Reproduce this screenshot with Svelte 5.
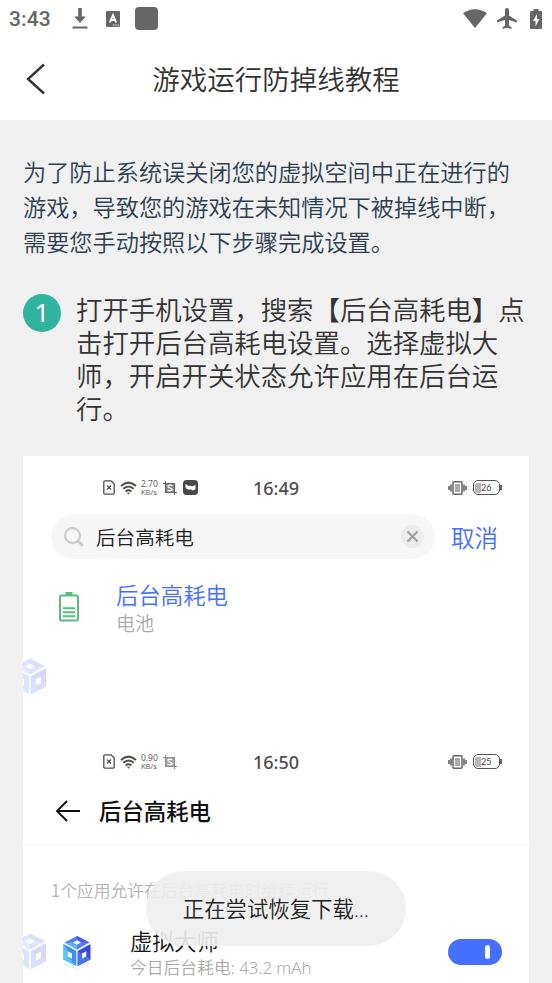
<script>
	const title = '游戏运行防掉线教程';
	const intro =
		'为了防止系统误关闭您的虚拟空间中正在进行的游戏，导致您的游戏在未知情况下被掉线中断，需要您手动按照以下步骤完成设置。';
	const step =
		'打开手机设置，搜索【后台高耗电】点击打开后台高耗电设置。选择虚拟大师，开启开关状态允许应用在后台运行。';
	const toast = '正在尝试恢复下载...';
</script>

{#snippet cube(faded)}
	<svg class="cube" class:faded viewBox="0 0 32 36">
		<path d="M16 2 28.500 8.500 16 15.500 3.500 8.500z" fill="#5080f6" />
		<path d="M16 2 28.500 8.500l-7.500 0-5-2.500z" fill="#4a5cf0" />
		<path d="M3.500 8.500l7.500 0 5 2.500v4.500z" fill="#5cb4ff" />
		<path d="M2.500 10 15.300 17v15L2.500 25.500z" fill="#3d8cfa" />
		<path d="M2.500 10 6.500 16v6l8.800 10L2.500 25.500z" fill="#4cc8ff" />
		<path d="M16.700 17l12.800-7v15.500L16.700 32z" fill="#3b45ee" />
		<path d="M16.700 32V17l4 2.500v5.500l5-2.500 3.800 3z" fill="#4674f7" />
		<path d="M16 6.300l4.200 2.200-4.200 2.300-4.200-2.300z" fill="#fff" />
		<path d="M6.700 17.200l4.300 2.300v5.300l-4.300-2.300z" fill="#fff" />
		<path d="M21 19.500l4.300-2.300v5.300L21 24.800z" fill="#fff" />
		<path d="M3 28l13 6.500L29 28v3l-13 5-13-5z" fill="#a9c4ff" opacity=".18" />
	</svg>
{/snippet}

{#snippet phoneBar(time, speed, level, messenger)}
	<div class="phone-bar">
		<div class="bar-left">
			<svg width="12" height="15" viewBox="0 0 12 15" fill="none" stroke="#4d4d4d">
				<path d="M2 .8h6l3.200 3.200v9q0 1.200-1.200 1.200H2Q.8 14.200.8 13V2Q.8.8 2 .8z" stroke-width="1.300" />
				<path d="M4 5.500l4 4m0-4l-4 4" stroke-width="1.300" />
			</svg>
			<svg class="wifi" width="17" height="14" viewBox="0 0 17 14" fill="none" stroke="#4d4d4d" stroke-width="2">
				<path d="M1 5Q8.500-1.800 16 5M3.300 7.800q5.200-4.600 10.400 0M5.700 10.400q2.800-2.400 5.600 0" />
				<path d="M6.900 11.800h3.200l-1.600 2z" fill="#4d4d4d" stroke="none" />
			</svg>
			<div class="speed"><span>{speed}</span><span>KB/s</span></div>
			<svg class:pale={!messenger} width="14" height="14" viewBox="0 0 14 14" fill="none" stroke="#666">
				<path d="M0 2.500h11.500V14M2.500 0v11.500H14" stroke-width="1.200" />
				<path d="M3 3h8v8H3z" fill="#888" stroke="none" />
				<path d="M9.300 4.700Q6.900 3.500 5.400 4.600T7 7t1.600 2.300-4.100 0" stroke="#fff" stroke-width="1.200" />
			</svg>
			{#if messenger}
				<svg class="messenger" width="15" height="15" viewBox="0 0 15 15">
					<rect width="15" height="15" rx="3.500" fill="#484848" />
					<path d="M2.500 4l3.200 2 1.500-.5 1.800 1 3.500-1.500v4q-1.500 1.800-3.300 1.200l-1.700-1-1.500.5q-3.300-.7-3.500-3z" fill="#fff" />
				</svg>
			{/if}
		</div>
		<time>{time}</time>
		<div class="bar-right">
			<svg width="19" height="14" viewBox="0 0 19 14" fill="none" stroke="#666">
				<rect x="5" y=".8" width="9" height="12.400" rx="1" fill="#fff" stroke-width="1.500" />
				<path d="M7 3h5v8H7z" fill="#aaa" stroke="none" />
				<path d="M3 3.500v7M16 3.500v7M1 5v4M18 5v4" stroke-width="1.600" />
			</svg>
			<div class="level"><i></i><span>{level}</span></div>
		</div>
	</div>
{/snippet}

<div class="page">
	<div class="system-bar">
		<span class="clock">3:43</span>
		<svg class="download" width="16" height="21" viewBox="0 0 16 21" fill="#666">
			<path d="M6.200 0h3.600v8.500h4L8 15 2.200 8.500h4zM.5 18.500h15v2H.5z" />
		</svg>
		<svg class="letter" width="14" height="16" viewBox="0 0 14 16">
			<rect width="14" height="16" rx="1" fill="#666" />
			<path d="M3.800 11.500L7 4l3.200 7.500M5 9h4" fill="none" stroke="#fff" stroke-width="1.800" />
			<path d="M7 13.500h1.300v1H7zM9.300 13.500h1.300v1H9.300zM11.600 13.500h1.300v1h-1.300z" fill="#fff" />
		</svg>
		<i class="square"></i>
		<div class="system-right">
			<svg width="24" height="19" viewBox="0 0 24 19" fill="#666"><path d="M0 4.200Q12-3.600 24 4.200L12 19z" /></svg>
			<svg class="plane" width="20" height="21" viewBox="0 0 20 21" fill="#666">
				<path d="M20 14.500v-2l-8-5V2q0-2-2-2T8 2v5.500l-8 5v2L8 12v5.500L5.500 19.500V21l4.500-1.300 4.500 1.300v-1.500L12 17.500V12z" />
			</svg>
			<svg class="charge" width="12" height="20" viewBox="0 0 12 20">
				<path d="M3.500 0h5v2H11q1 0 1 1v16q0 1-1 1H1q-1 0-1-1V3q0-1 1-1h2.500z" fill="#666" />
				<path d="M7 5L3 12h2.500v5.500L9.500 10H7z" fill="#fff" />
			</svg>
		</div>
	</div>

	<header>
		<svg class="back" width="20" height="32" viewBox="0 0 20 32">
			<path d="M18 1.500L2 16l16 14.500" fill="none" stroke="#333" stroke-width="2.400" />
		</svg>
		<h1>{title}</h1>
	</header>

	<main>
		<p class="intro">{intro}</p>

		<div class="step">
			<span class="num">1</span>
			<p>{step}</p>
		</div>

		<div class="shots">
			<section class="first">
				{@render phoneBar('16:49', '2.70', 26, true)}
				<div class="search-row">
					<div class="search">
						<svg width="22" height="22" viewBox="0 0 22 22" fill="none" stroke="#cdcdcd" stroke-width="2.300">
							<circle cx="9.500" cy="9.500" r="7.500" />
							<path d="M15 15l5 5" stroke-width="3" />
						</svg>
						<span>后台高耗电</span>
						<svg class="clear" width="23" height="23" viewBox="0 0 23 23">
							<circle cx="11.500" cy="11.500" r="11.500" fill="#ececec" />
							<path d="M6.500 6.500l10 10m0-10l-10 10" stroke="#a0a0a0" stroke-width="2" />
						</svg>
					</div>
					<span class="cancel">取消</span>
				</div>
				<div class="result">
					<svg width="20" height="30" viewBox="0 0 20 30" fill="none" stroke="#55bf7b">
						<rect x="1" y="3.500" width="18" height="25" rx="1.500" stroke-width="2" />
						<path d="M6.500 1.500h7" stroke-width="3" />
						<path d="M4 16.200h12M4 20.200h12M4 24.200h12" stroke-width="2" />
					</svg>
					<div>
						<strong>后台高耗电</strong>
						<small>电池</small>
					</div>
				</div>
				<div class="ghost">{@render cube(true)}</div>
			</section>

			<section>
				{@render phoneBar('16:50', '0.90', 25, false)}
				<div class="sub-head">
					<svg width="26" height="22" viewBox="0 0 26 22" fill="none" stroke="#111" stroke-width="1.900">
						<path d="M12 1L2 11l10 10M2 11h23" />
					</svg>
					<span>后台高耗电</span>
				</div>
				<p class="allowed">1个应用允许在后台高耗电时继续运行</p>
				<div class="app-row">
					<div class="ghost">{@render cube(true)}</div>
					<div class="app-icon">{@render cube(false)}</div>
					<div class="app-info">
						<strong>虚拟大师</strong>
						<small>今日后台耗电: 43.2 mAh</small>
					</div>
					<span class="switch"><i></i></span>
				</div>
			</section>
		</div>
	</main>

	<div class="toast">{toast}</div>
</div>

<style>
	:global(body) {
		overflow: hidden;
	}

	.page {
		position: relative;
		width: 552px;
		height: 983px;
		overflow: hidden;
		background: #f1f1f1;
		font-family: 'Noto Sans CJK SC', sans-serif;
		font-weight: 350;
		color: #333;
	}

	svg {
		display: block;
		flex: none;
	}

	p,
	h1 {
		margin: 0;
		font-weight: 350;
	}

	.system-bar {
		display: flex;
		align-items: center;
		height: 37px;
		padding: 0 10px 0 9px;
		background: #fff;
	}

	.clock {
		width: 63px;
		font: 500 21px/37px Roboto, sans-serif;
		letter-spacing: 0.1px;
		color: #666;
		padding-top: 2px;
	}

	.letter {
		margin-left: 18px;
	}

	.square {
		width: 23px;
		height: 23px;
		margin-left: 15px;
		border-radius: 4px;
		background: #666;
	}

	.system-right {
		display: flex;
		align-items: center;
		margin-left: auto;
	}

	.plane {
		margin-left: 10px;
	}

	.charge {
		margin-left: 13px;
	}

	header {
		display: grid;
		grid-template-columns: 60px 1fr 60px;
		align-items: center;
		height: 83px;
		background: #fff;
	}

	.back {
		margin-left: 26px;
	}

	h1 {
		font-size: 27.500px;
		line-height: 83px;
		text-align: center;
	}

	main {
		padding: 34px 23px 0;
	}

	.intro {
		font-size: 23.200px;
		line-height: 35px;
		color: #2c3e50;
	}

	.step {
		display: flex;
		gap: 15px;
		margin-top: 33px;
	}

	.step p {
		flex: 1;
		font-size: 26.400px;
		line-height: 33px;
	}

	.num {
		width: 38px;
		height: 38px;
		margin-top: 2px;
		border-radius: 50%;
		background: #31b39f;
		color: #fff;
		font-family: 'Noto Sans', sans-serif;
		font-weight: 400;
		font-size: 26px;
		line-height: 37px;
		text-align: center;
	}

	.shots {
		height: 560px;
		margin-top: 32px;
		background: #fff;
	}

	section {
		padding-top: 20px;
	}

	.first {
		box-sizing: border-box;
		height: 274px;
	}

	.phone-bar {
		display: grid;
		grid-template-columns: 143px 60px 1fr;
		align-items: center;
		height: 23px;
		padding: 0 28px 0 80px;
	}

	.bar-left {
		display: flex;
		align-items: center;
	}

	.wifi {
		margin-left: 5px;
	}

	.speed {
		display: flex;
		flex-direction: column;
		width: 18px;
		margin: 0 4px;
		font: 8.500px/8px 'Open Sans', sans-serif;
		color: #555;
		white-space: nowrap;
	}

	.speed span:last-child {
		font-size: 7.500px;
	}

	.pale {
		opacity: 0.75;
	}

	.messenger {
		margin-left: 6px;
	}

	time {
		padding-top: 1px;
		font: 500 18px/20px 'Noto Sans', sans-serif;
		text-align: center;
		color: #4d4d4d;
		white-space: nowrap;
	}

	.bar-right {
		display: flex;
		align-items: center;
		justify-content: flex-end;
		gap: 6px;
	}

	.level {
		position: relative;
		display: flex;
		align-items: center;
		box-sizing: border-box;
		width: 27px;
		height: 15px;
		margin-right: 1px;
		padding-left: 1px;
		border: 1px solid #555;
		border-radius: 5px;
		font: 9px/13px Lato, sans-serif;
		color: #444;
	}

	.level::after {
		content: '';
		position: absolute;
		right: -3px;
		top: 4px;
		width: 2px;
		height: 5px;
		background: #666;
	}

	.level i {
		width: 6px;
		height: 10px;
		border-radius: 2px 0 0 2px;
		background: #b5b5b5;
	}

	.search-row {
		display: flex;
		align-items: center;
		height: 45px;
		margin-top: 15px;
		padding-left: 28px;
	}

	.search {
		display: flex;
		align-items: center;
		box-sizing: border-box;
		width: 384px;
		height: 45px;
		padding: 0 11px 0 12px;
		border-radius: 23px;
		background: #f7f7f7;
		font-size: 19.600px;
		color: #222;
	}

	.search span {
		margin-left: 11px;
	}

	.clear {
		margin-left: auto;
	}

	.cancel {
		margin-left: 16px;
		font-size: 23.500px;
		color: #456fff;
	}

	.result {
		display: flex;
		gap: 37px;
		margin-top: 20px;
		padding-left: 36px;
	}

	.result svg {
		margin-top: 13px;
	}

	strong,
	small {
		display: block;
		font-weight: 350;
	}

	.result strong {
		font-size: 22.400px;
		line-height: 31px;
		color: #456fff;
	}

	.result small {
		font-size: 19px;
		line-height: 26px;
		color: #aaa;
	}

	.ghost {
		width: 26px;
		height: 44px;
		overflow: hidden;
	}

	.first .ghost {
		margin-top: 20px;
	}

	.cube {
		width: 32px;
		height: 36px;
	}

	.cube.faded {
		width: 38px;
		height: 43px;
		margin-left: -12px;
		opacity: 0.2;
	}

	.sub-head {
		display: flex;
		align-items: center;
		gap: 18px;
		height: 71px;
		padding: 0 32px;
		border-bottom: 1px solid #f3f3f3;
		font-size: 22.400px;
		font-weight: 500;
		color: #111;
	}

	.sub-head svg {
		margin-top: 5px;
	}

	.sub-head span {
		margin-top: 2px;
	}

	.allowed {
		margin-top: 32px;
		padding-left: 28px;
		font-size: 16.800px;
		line-height: 26px;
		color: #b2b2b2;
	}

	.app-row {
		display: flex;
		align-items: flex-start;
		margin-top: 22px;
	}

	.app-row .ghost {
		margin-top: 6px;
	}

	.app-icon {
		width: 32px;
		margin: 9px 0 0 12px;
	}

	.app-info {
		margin-left: 37px;
	}

	.app-info strong {
		font-size: 22.200px;
		line-height: 30px;
		color: #111;
	}

	.app-info small {
		font-family: 'Noto Sans', 'Noto Sans CJK SC', sans-serif;
		font-size: 16.800px;
		line-height: 26px;
		color: #aaa;
	}

	.switch {
		display: flex;
		align-items: center;
		justify-content: flex-end;
		box-sizing: border-box;
		width: 54px;
		height: 26px;
		margin: 14px 27px 0 auto;
		padding-right: 12px;
		border-radius: 13px;
		background: #456fff;
	}

	.switch i {
		width: 5px;
		height: 14px;
		border-radius: 3px;
		background: #fff;
	}

	.toast {
		position: absolute;
		left: 146px;
		top: 871px;
		width: 260px;
		height: 75px;
		border-radius: 38px;
		background: rgba(238, 238, 238, 0.91);
		font-family: Roboto, 'Noto Sans CJK SC', sans-serif;
		font-size: 21.400px;
		line-height: 77px;
		text-align: center;
		color: #222;
	}
</style>
